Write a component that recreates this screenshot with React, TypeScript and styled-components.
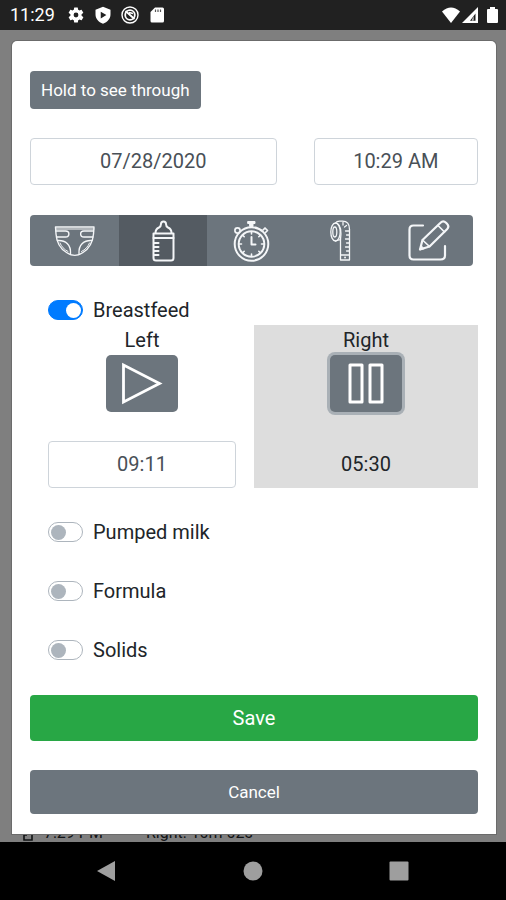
import React, { useState } from "react";
import styled, { createGlobalStyle, css } from "styled-components";

const slate = "#6c757d";
const slateDark = "#545b62";

const GlobalStyle = createGlobalStyle`
  *, *::before, *::after { box-sizing: border-box; }
  body { margin: 0; background: #000; }
  body, button, input { font-family: Roboto, "Liberation Sans", sans-serif; }
`;

const Screen = styled.div`
  display: flex;
  flex-direction: column;
  min-height: 100vh;
  color: #212529;
  font-size: 20px;
  line-height: 30px;
`;

const StatusBar = styled.header`
  display: flex;
  align-items: center;
  justify-content: space-between;
  height: 30px;
  padding: 0 8px 0 10px;
  background: #212121;
  color: #fff;
  font-size: 18px;
`;

const StatusGroup = styled.div<{ $gap: number }>`
  display: flex;
  align-items: center;
  gap: ${(p) => p.$gap}px;

  svg { display: block; }
`;

const Clock = styled.span`
  margin-right: 3px;
`;

const Stage = styled.div`
  display: grid;
  grid-template-columns: minmax(0, 1fr);
  flex: 1;
  background: #7f7f7f;
`;

const HistoryRow = styled.div`
  grid-area: 1 / 1;
  align-self: end;
  display: flex;
  align-items: center;
  gap: 10px;
  padding-left: 22px;
  color: #111315;
  font-size: 16px;
  line-height: 18px;
`;

const HistoryTime = styled.span`
  flex: 0 0 92px;
`;

const Dialog = styled.form`
  grid-area: 1 / 1;
  z-index: 1;
  display: flex;
  flex-direction: column;
  align-items: stretch;
  margin: 11px 10px 8px 12px;
  padding: 30px 18px 20px;
  border-radius: 5px 5px 0 0;
  background: #fff;
  box-shadow: 0 0 0 1px #6b6b6b;
`;

const Button = styled.button<{ $tone?: "success"; $size?: "small" }>`
  height: ${(p) => (p.$tone ? 46 : 44)}px;
  padding: 0 11px;
  border: 0;
  border-radius: 4px;
  background: ${(p) => (p.$tone ? "#28a745" : slate)};
  color: #fff;
  font-size: ${(p) => (p.$tone ? 20 : 17)}px;
  cursor: pointer;
  ${(p) => p.$size && css`
    align-self: flex-start;
    height: 38px;
  `}
`;

const Field = styled.input`
  min-width: 0;
  width: 100%;
  height: 47px;
  padding: 0 12px 2px;
  border: 1px solid #ced4da;
  border-radius: 4px;
  background: #fff;
  color: #495057;
  font-size: 20px;
  text-align: center;
`;

const DateRow = styled.div`
  display: grid;
  grid-template-columns: 3fr 2fr;
  gap: 37px;
  margin: 29px 0 30px;
`;

const Tabs = styled.div`
  display: grid;
  grid-template-columns: repeat(5, 1fr);
  height: 51px;
  margin-right: 5px;
  border-radius: 4px;
  overflow: hidden;
`;

const Tab = styled.button`
  display: grid;
  place-items: center;
  padding: 0;
  border: 0;
  background: ${slate};
  color: #f4f6f8;
  cursor: pointer;

  &[aria-selected="true"] { background: ${slateDark}; }
`;

const Switch = styled.label`
  display: flex;
  align-items: center;
  align-self: flex-start;
  gap: 10px;
  margin-left: 18px;
  cursor: pointer;
`;

const SwitchInput = styled.input`
  appearance: none;
  display: flex;
  align-items: center;
  width: 35px;
  height: 20px;
  margin: 0;
  padding: 0 2px;
  border: 1px solid #adb5bd;
  border-radius: 10px;
  background: #fff;

  &::before {
    content: "";
    width: 15px;
    height: 15px;
    border-radius: 50%;
    background: #adb5bd;
  }
  &:checked {
    justify-content: flex-end;
    padding: 0 1px;
    border-color: #007bff;
    background: #007bff;
  }
  &:checked::before { background: #fff; }
`;

const Feeding = styled.section`
  margin-top: 29px;
  display: flex;
  flex-direction: column;
`;

const Sides = styled.div`
  display: grid;
  grid-template-columns: 1fr 1fr;
`;

const Side = styled.div<{ $running?: boolean }>`
  display: flex;
  flex-direction: column;
  align-items: center;
  padding: 0 18px;
  background: ${(p) => (p.$running ? "#ddd" : "transparent")};
`;

const TimerButton = styled.button<{ $running?: boolean }>`
  display: grid;
  place-items: center;
  width: 72px;
  height: 57px;
  margin-bottom: 29px;
  padding: 0;
  border: 0;
  border-radius: 5px;
  background: ${slate};
  color: #fff;
  cursor: pointer;
  ${(p) => p.$running && css`
    box-shadow: 0 0 0 3px #a9b0b6;
  `}
`;

const Elapsed = styled.output`
  line-height: 46px;
`;

const OtherFoods = styled.div`
  display: flex;
  flex-direction: column;
  gap: 29px;
  margin: 29px 0 30px;
`;

const Actions = styled.div`
  display: flex;
  flex-direction: column;
  gap: 29px;
`;

const NavBar = styled.nav`
  display: grid;
  grid-template-columns: repeat(3, 146px);
  justify-content: center;
  height: 58px;
  background: #000;
`;

const NavButton = styled.button`
  display: grid;
  place-items: center;
  padding: 0;
  border: 0;
  background: none;
  color: #9e9e9e;
`;

const Glyph = ({ children }: { children: React.ReactNode }) => (
  <svg width="44" height="44" viewBox="0 0 44 44" fill="none" stroke="currentColor" strokeLinejoin="round" strokeLinecap="round" aria-hidden="true">
    {children}
  </svg>
);

const DiaperIcon = () => (
  <Glyph>
    <g strokeWidth="1.4">
      <path d="M3.500 8h38.500l-.5 7c-.8 9-5 15-10.500 18.500-5 3.800-11.500 3.800-16.500 0C8.500 30 4.700 24 4 15z" />
      <path d="M4 10h38" strokeWidth="1" />
      <path d="M4 12h9.500c4.500 0 4.500 6 0 6H4.500M41.500 12H32c-4.500 0-4.500 6 0 6h9" />
      <path d="M5.500 21.500c8-.5 13.500 4 13 13M40 21.500c-8-.5-13.500 4-13 13" />
      <path d="M8 24c1.500 3.500 4 6.500 8 8.500M37.500 24c-1.500 3.500-4 6.500-8 8.500" strokeWidth="1" />
    </g>
  </Glyph>
);

const BottleIcon = () => (
  <Glyph>
    <g strokeWidth="2">
      <path d="M14.500 14c0-3 1-4.500 3.500-5.500 1.500-.7 2-1.500 2-3.500 0-3.500 5-3.500 5 0 0 2 .5 2.800 2 3.500 2.500 1 3.500 2.500 3.500 5.500" />
      <path d="M12.500 14.500h20v4.500h-20z" />
      <path d="M12.500 19v20c0 1.800.7 2.500 2.500 2.500h15c1.800 0 2.500-.7 2.500-2.500V19" />
      <path d="M13.500 24h4M13.500 28h4M13.500 32h4M13.500 36h4" />
    </g>
  </Glyph>
);

const StopwatchIcon = () => (
  <Glyph>
    <circle cx="22.500" cy="25" r="16.800" strokeWidth="2" />
    <circle cx="22.500" cy="25" r="12.800" strokeWidth="2" />
    <path d="M22.500 18v7.500h4" strokeWidth="2" />
    <path d="M22.500 13v2M22.500 35v2M10.500 25h2M32.500 25h2M14 16.500l1.200 1.200M31 16.500l-1.200 1.200M14 33.500l1.200-1.200M31 33.500l-1.200-1.200" strokeWidth="1.600" />
    <path d="M19 2.500h7v2h-7zM21 5h3v2.500h-3z" fill="currentColor" strokeWidth="1" />
    <circle cx="8.500" cy="11.500" r="2.600" strokeWidth="1.700" />
    <path d="m34 11 2-2 2.500 2.500-2 2" strokeWidth="1.700" />
  </Glyph>
);

const TapeIcon = () => (
  <Glyph>
    <g strokeWidth="1.300">
      <ellipse cx="17.500" cy="13" rx="4.700" ry="9" />
      <ellipse cx="16.800" cy="13" rx="2" ry="5" />
      <path d="M17.500 4c1-1.500 2.500-1.800 4-1.800h3c5 0 7 3 7 8V41h-9V20.500L17.500 22" />
      <path d="M19.500 4.500c3 2 4 8 3 16M25 3.500v2.500M28.500 6.500l-2 1.500M31 12h-3.500M31 16h-2.500M31 20h-3.500M31 24h-2.500M31 28h-3.500M31 32h-2.500M23 36h8" />
      <path d="M27 38.500h.1" strokeWidth="1.800" />
    </g>
  </Glyph>
);

const EditIcon = () => (
  <Glyph>
    <g strokeWidth="2.200">
      <path d="M16 6.500H6.500C3.500 6.500 2.500 8 2.500 10.500v26c0 2.500 1.200 4 4 4h27c3 0 4.500-1.500 4.500-4V27" />
      <path d="m13 30.500 2.500-9.500L33.500 3.800c2-2 4-1.500 5.500 0l1 1c2 2 1.700 3.700 0 5.500L22.500 27.500z" />
      <path d="m15.500 21 7 6.500M31 6.500l6.500 6.500" strokeWidth="1.700" />
    </g>
    <path d="m13 30.500 1-4 3 3z" fill="currentColor" />
  </Glyph>
);

const StatusIcons = () => (
  <>
    <svg width="18" height="18" viewBox="0 0 24 24" fill="#fff" aria-hidden="true">
      <path fillRule="evenodd" d="m19.400 13 .1-1-.1-1 2.100-1.600c.2-.2.200-.4.100-.6l-2-3.500c-.1-.2-.4-.3-.6-.2l-2.500 1a7 7 0 0 0-1.700-1l-.4-2.600A.5.500 0 0 0 14 2h-4a.5.500 0 0 0-.5.400l-.4 2.700a8 8 0 0 0-1.700 1l-2.500-1c-.2-.1-.5 0-.6.200l-2 3.500c-.1.200-.1.500.1.600L4.600 11l-.1 1 .1 1-2.200 1.600c-.2.2-.2.4-.1.600l2 3.500c.1.200.4.300.6.200l2.500-1a7 7 0 0 0 1.700 1l.4 2.700c0 .2.200.4.500.4h4c.2 0 .5-.2.500-.4l.4-2.700a8 8 0 0 0 1.700-1l2.500 1c.2.100.5 0 .6-.2l2-3.500c.1-.2.100-.5-.1-.6zM12 15.200a3.200 3.200 0 1 1 0-6.400 3.200 3.200 0 0 1 0 6.400z" />
    </svg>
    <svg width="18" height="18" viewBox="0 0 24 24" fill="#fff" aria-hidden="true">
      <path fillRule="evenodd" d="m12 1 10 4v6c0 6-4 10.500-10 12.500C6 21.500 2 17 2 11V5zM9 7.500v9l7.500-4.500z" />
    </svg>
    <svg width="18" height="18" viewBox="0 0 18 18" fill="none" stroke="#fff" aria-hidden="true">
      <circle cx="9" cy="9" r="8" strokeWidth="1.400" />
      <circle cx="9" cy="9" r="4.800" strokeWidth="1.800" />
      <path d="m4.500 5 9 8M8 6.500l4 1" strokeWidth="1.800" />
    </svg>
    <svg width="18" height="18" viewBox="0 0 18 18" aria-hidden="true">
      <path d="M7 1.500h7.500q1.500 0 1.500 1.500v12q0 1.500-1.500 1.500H4q-1.500 0-1.500-1.500V6z" fill="#fff" />
      <path d="M7.500 3.500v2.500M10 3.500v2.500M12.500 3.500v2.500" stroke="#555" strokeWidth="1.200" />
    </svg>
  </>
);

const tabs = [
  { name: "Diaper", Icon: DiaperIcon },
  { name: "Feeding", Icon: BottleIcon },
  { name: "Timer", Icon: StopwatchIcon },
  { name: "Measurements", Icon: TapeIcon },
  { name: "Notes", Icon: EditIcon },
];

export default function App() {
  const [active, setActive] = useState("Feeding");

  return (
    <Screen>
      <GlobalStyle />
      <StatusBar>
        <StatusGroup $gap={9}>
          <Clock>11:29</Clock>
          <StatusIcons />
        </StatusGroup>
        <StatusGroup $gap={1}>
          <svg width="20" height="18" viewBox="0 0 20 18" aria-hidden="true">
            <path d="M1 5.500q9-8 18 0L10 17z" fill="#fff" />
          </svg>
          <svg width="24" height="18" viewBox="0 0 24 18" aria-hidden="true">
            <path fillRule="evenodd" d="M0 17 16 1v16zm8-2.200h5.500V7.500z" fill="#fff" />
            <path d="M10 14.500h1.500V10z" fill="#fff" />
          </svg>
          <svg width="11" height="18" viewBox="0 0 11 18" aria-hidden="true">
            <path d="M3 1h5v2h2q1 0 1 1v12q0 1-1 1H1q-1 0-1-1V4q0-1 1-1h2z" fill="#fff" />
          </svg>
        </StatusGroup>
      </StatusBar>

      <Stage>
        <HistoryRow aria-hidden="true">
          <svg width="12" height="18" viewBox="0 0 12 18" fill="none" stroke="currentColor" strokeWidth="1.600">
            <path d="M2 6h8v10H2zM4 6V3h4v3M2 11h3" />
          </svg>
          <HistoryTime>7:29 PM</HistoryTime>
          <span>Right: 10m 02s</span>
        </HistoryRow>

        <Dialog role="dialog" aria-label="Log entry" onSubmit={(e) => e.preventDefault()}>
          <Button type="button" $size="small">Hold to see through</Button>

          <DateRow>
            <Field aria-label="Date" defaultValue="07/28/2020" />
            <Field aria-label="Time" defaultValue="10:29 AM" />
          </DateRow>

          <Tabs role="tablist">
            {tabs.map(({ name, Icon }) => (
              <Tab key={name} type="button" role="tab" aria-label={name} aria-selected={active === name} onClick={() => setActive(name)}>
                <Icon />
              </Tab>
            ))}
          </Tabs>

          <Feeding>
            <Switch>
              <SwitchInput type="checkbox" role="switch" defaultChecked />
              Breastfeed
            </Switch>
            <Sides>
              <Side>
                <span>Left</span>
                <TimerButton type="button" aria-label="Start left">
                  <svg width="44" height="44" viewBox="0 0 44 44" fill="none" stroke="currentColor" strokeWidth="2.800" aria-hidden="true">
                    <path d="M3.500 3v37l36-18.500z" />
                  </svg>
                </TimerButton>
                <Field aria-label="Left duration" defaultValue="09:11" />
              </Side>
              <Side $running>
                <span>Right</span>
                <TimerButton type="button" $running aria-label="Pause right">
                  <svg width="44" height="44" viewBox="0 0 44 44" fill="none" stroke="currentColor" strokeWidth="3" strokeLinejoin="round" aria-hidden="true">
                    <path d="M6 3h12v37H6zM26 3h12v37H26z" />
                  </svg>
                </TimerButton>
                <Elapsed>05:30</Elapsed>
              </Side>
            </Sides>
          </Feeding>

          <OtherFoods>
            {["Pumped milk", "Formula", "Solids"].map((food) => (
              <Switch key={food}>
                <SwitchInput type="checkbox" role="switch" />
                {food}
              </Switch>
            ))}
          </OtherFoods>

          <Actions>
            <Button type="submit" $tone="success">Save</Button>
            <Button type="button">Cancel</Button>
          </Actions>
        </Dialog>
      </Stage>

      <NavBar>
        <NavButton type="button" aria-label="Back">
          <svg width="20" height="22" viewBox="0 0 20 22"><path d="M0 11 18 1v20z" fill="currentColor" /></svg>
        </NavButton>
        <NavButton type="button" aria-label="Home">
          <svg width="20" height="20" viewBox="0 0 20 20"><circle cx="10" cy="10" r="9.500" fill="currentColor" /></svg>
        </NavButton>
        <NavButton type="button" aria-label="Recent apps">
          <svg width="20" height="20" viewBox="0 0 20 20"><rect x=".5" y=".5" width="19" height="19" rx="1" fill="currentColor" /></svg>
        </NavButton>
      </NavBar>
    </Screen>
  );
}
